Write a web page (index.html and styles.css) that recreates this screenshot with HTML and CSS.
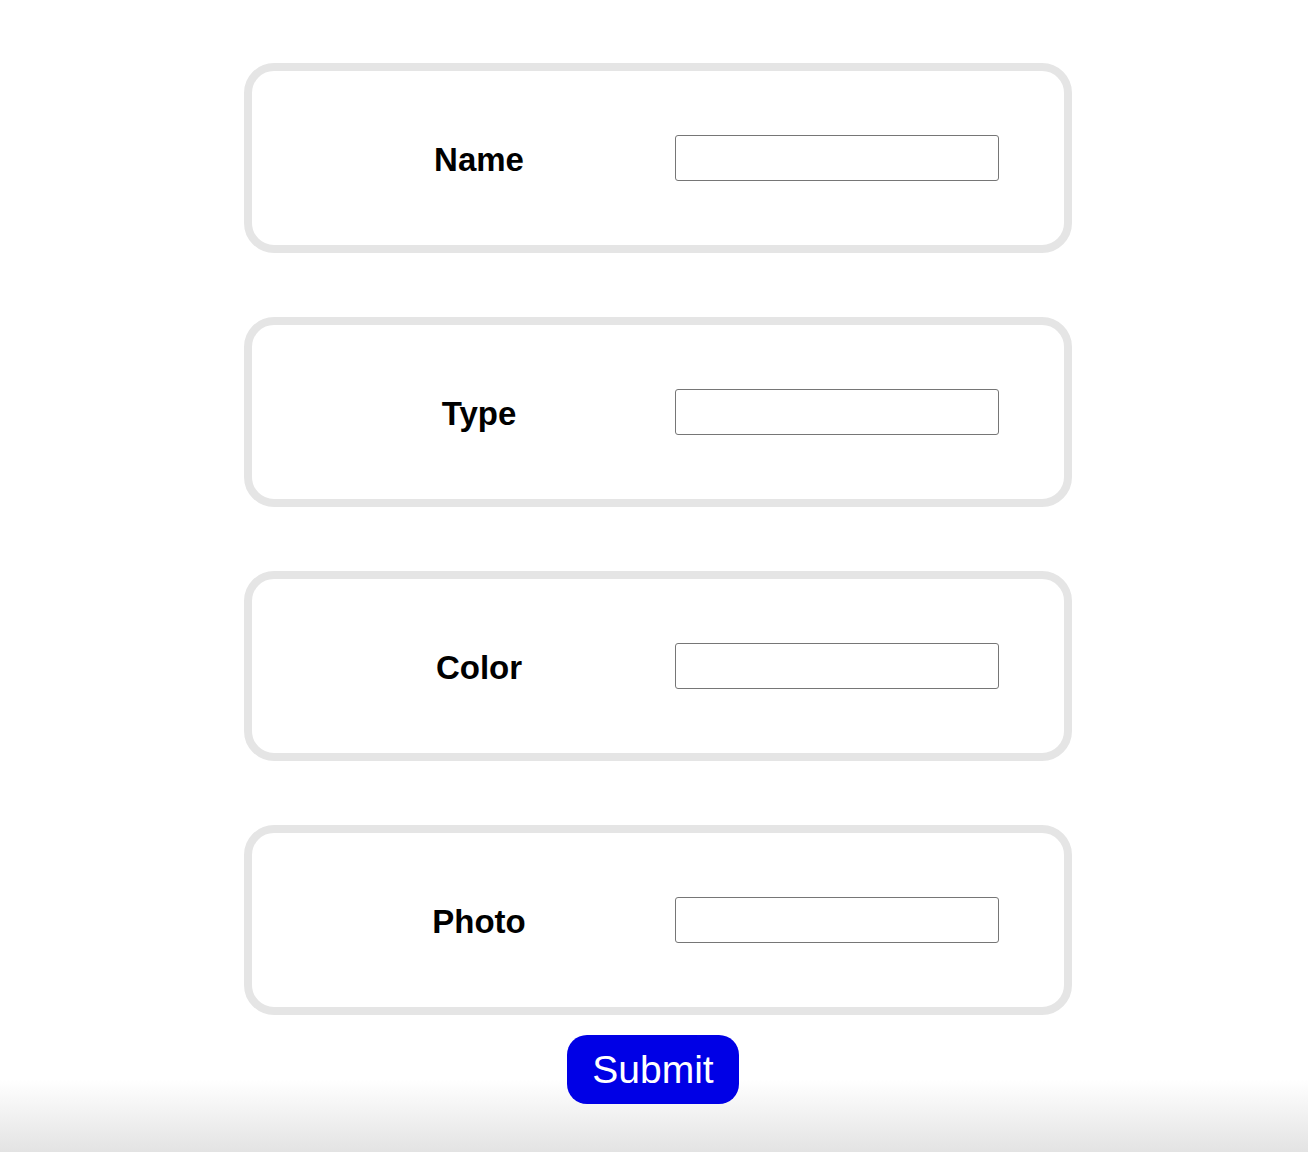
FILE: index.html
```html
<!DOCTYPE html>
<html lang="en">
<head>
<meta charset="utf-8">
<title>Form</title>
<link rel="stylesheet" href="styles.css">
</head>
<body>
<form class="form">
  <div class="cards">
    <div class="card">
      <label class="label" for="f-name">Name</label>
      <input class="field" id="f-name" type="text">
    </div>
    <div class="card">
      <label class="label" for="f-type">Type</label>
      <input class="field" id="f-type" type="text">
    </div>
    <div class="card">
      <label class="label" for="f-color">Color</label>
      <input class="field" id="f-color" type="text">
    </div>
    <div class="card">
      <label class="label" for="f-photo">Photo</label>
      <input class="field" id="f-photo" type="text">
    </div>
  </div>
  <button class="submit" type="submit">Submit</button>
</form>
</body>
</html>
```

FILE: styles.css
```css
html {
  height: 100%;
  background: linear-gradient(to bottom, #ffffff 0, #ffffff calc(100% - 72px), #e3e3e3 100%);
}

body {
  margin: 0;
  font-family: "Liberation Sans", Arial, sans-serif;
  color: #000;
}

.form {
  display: flex;
  flex-direction: column;
  align-items: center;
  padding-top: 63px;
}

.cards {
  display: flex;
  flex-direction: column;
  gap: 64px;
  padding-left: 8px;
}

.card {
  box-sizing: border-box;
  width: 828px;
  height: 190px;
  border: 8px solid #e5e5e5;
  border-radius: 30px;
  display: grid;
  grid-template-columns: 392px 1fr;
  align-items: center;
  padding-left: 31px;
}

.label {
  text-align: center;
  font-weight: bold;
  font-size: 33px;
  line-height: 40px;
  padding-top: 4px;
}

.field {
  box-sizing: border-box;
  width: 324px;
  height: 46px;
  border: 1px solid #767676;
  border-radius: 3px;
  background: #fff;
  margin: 0;
  padding: 0 4px;
  font: 16px "Liberation Sans", Arial, sans-serif;
}

.submit {
  margin-top: 20px;
  margin-right: 2px;
  width: 172px;
  height: 69px;
  border: none;
  border-radius: 20px;
  background: #0000e6;
  color: #fff;
  font-family: "Liberation Sans", Arial, sans-serif;
  font-size: 39px;
  padding: 0;
  line-height: 1;
}
```
